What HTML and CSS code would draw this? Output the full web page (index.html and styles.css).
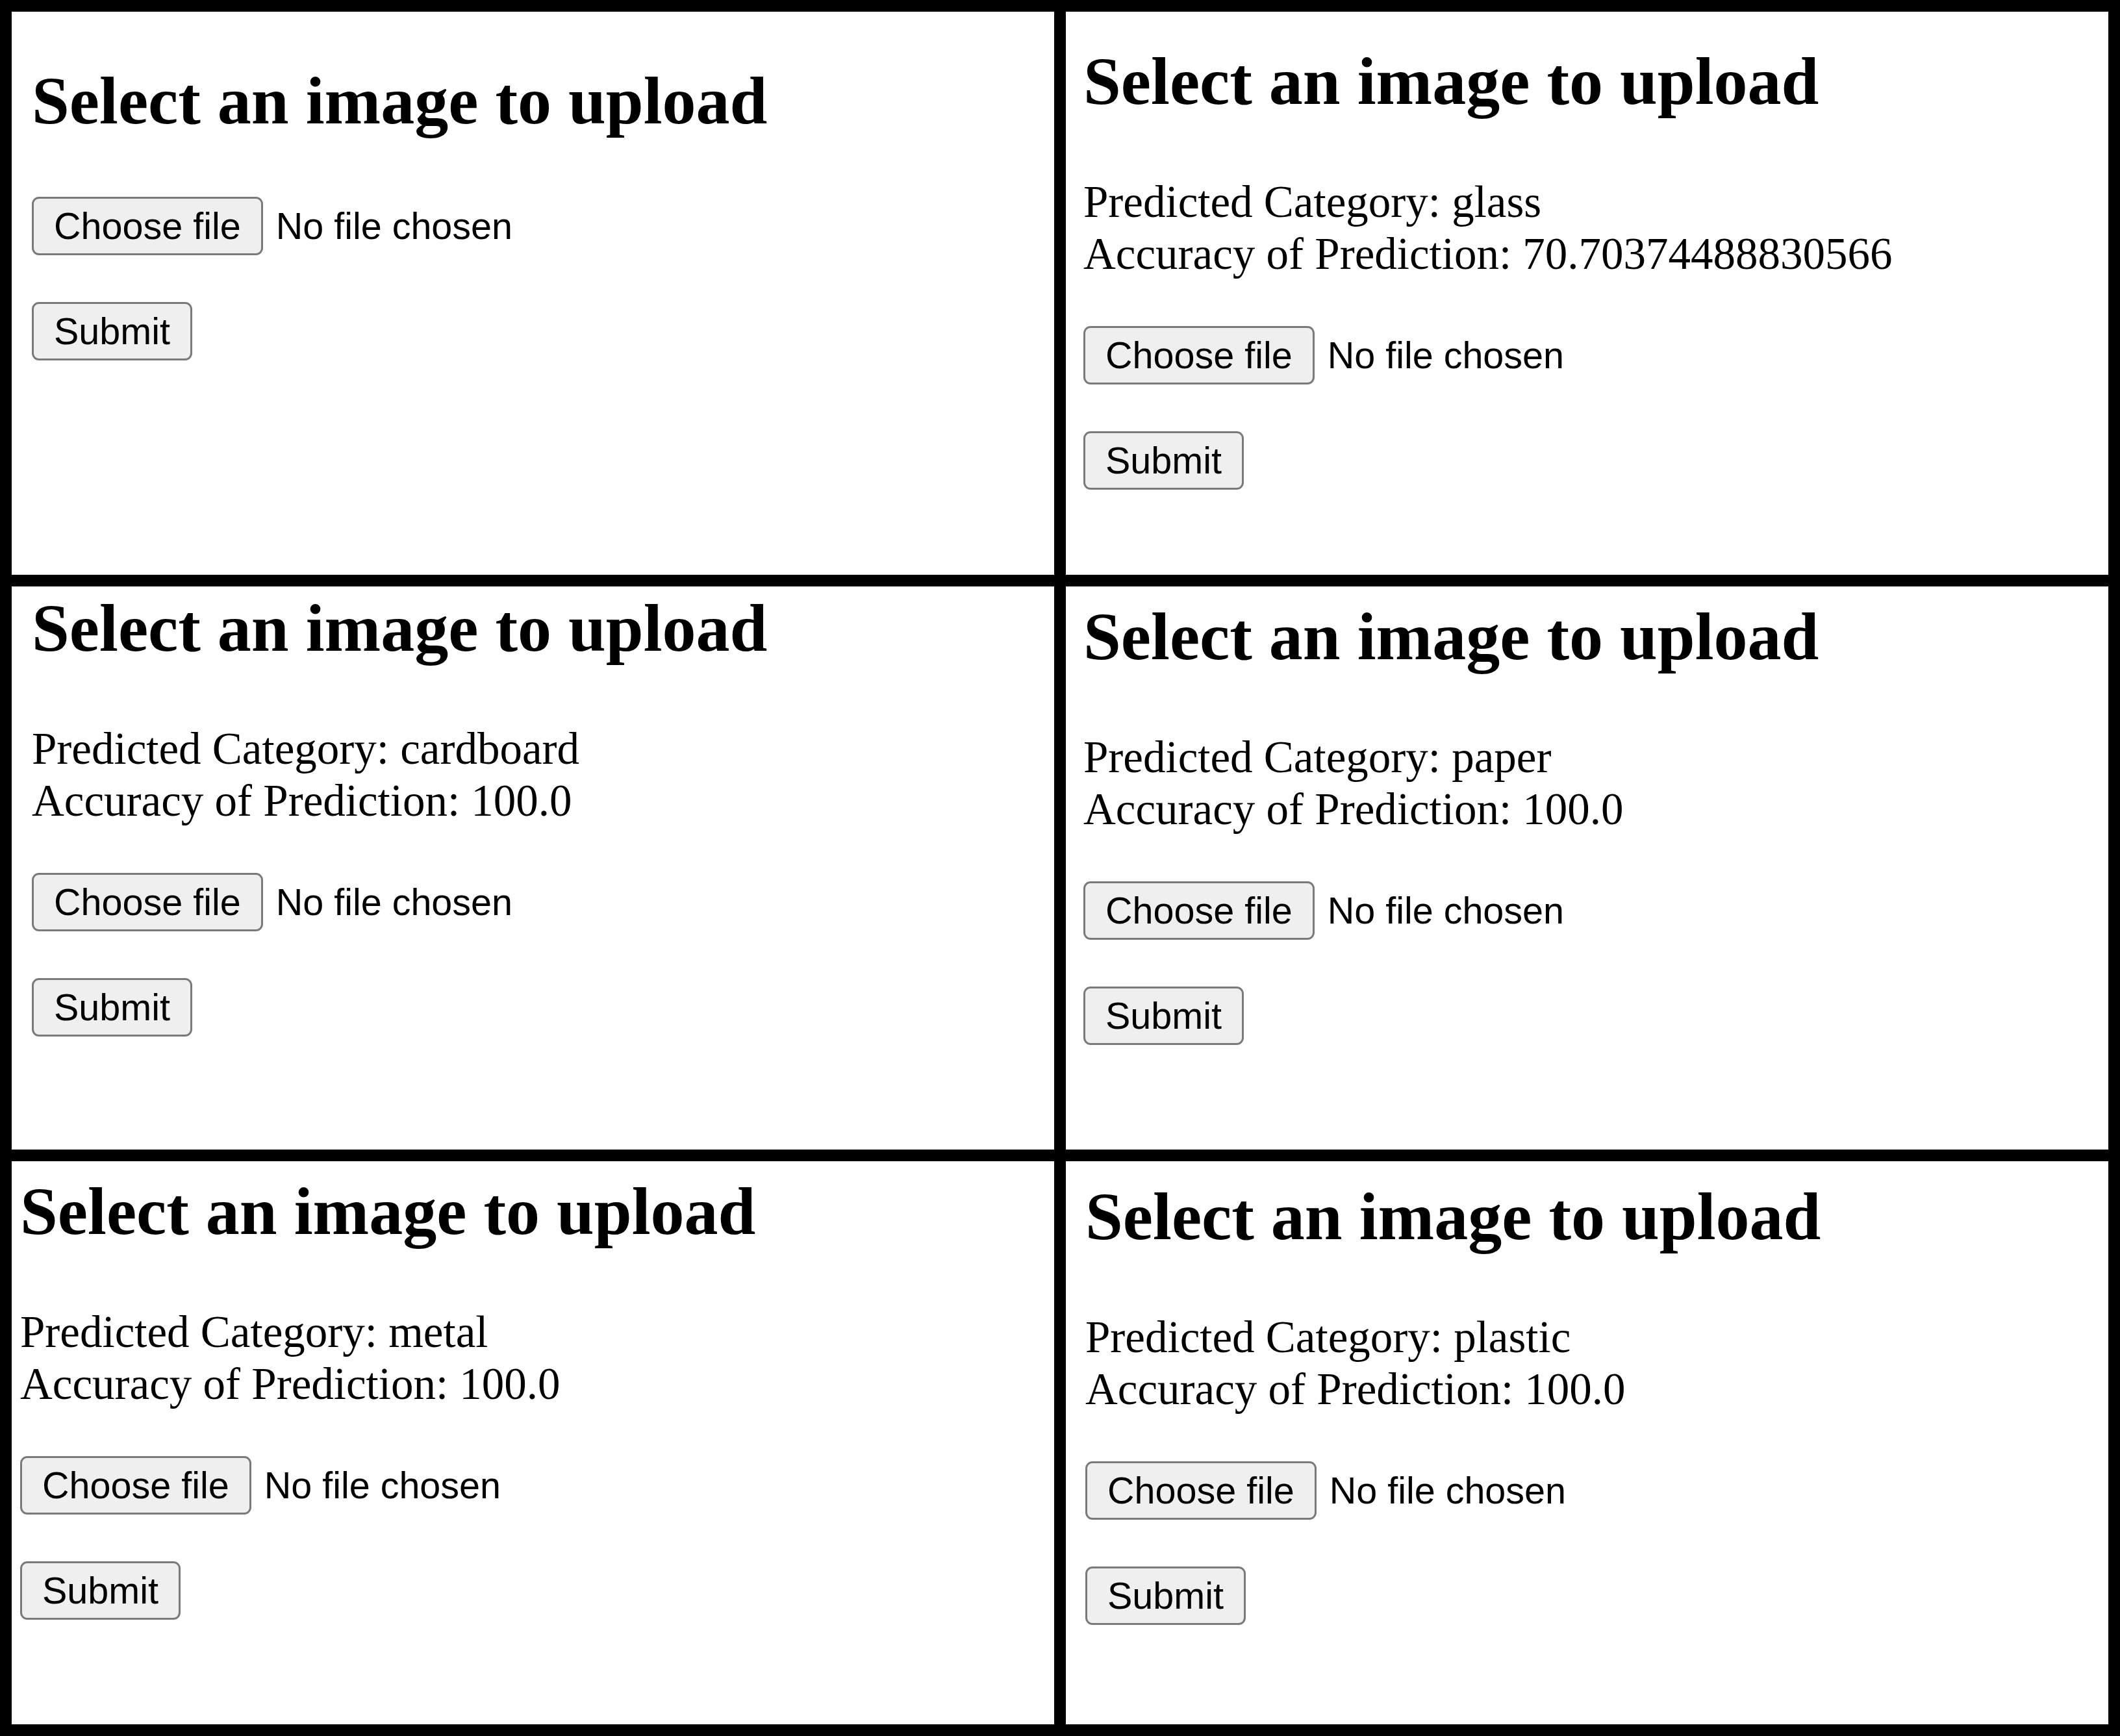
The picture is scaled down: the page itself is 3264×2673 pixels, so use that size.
FILE: index.html
```html
<!DOCTYPE html>
<html lang="en">
<head>
<meta charset="utf-8">
<title>Select an image to upload</title>
<link rel="stylesheet" href="styles.css">
</head>
<body>
<main class="collage">
  <section class="panel panel--1">
    <h2 class="title">Select an image to upload</h2>
    <form class="upload">
      <div class="file-row"><span class="btn">Choose file</span><span class="file-name">No file chosen</span></div>
      <span class="btn">Submit</span>
    </form>
  </section>
  <section class="panel panel--2">
    <h2 class="title">Select an image to upload</h2>
    <p class="result">Predicted Category: glass<br>Accuracy of Prediction: 70.70374488830566</p>
    <form class="upload">
      <div class="file-row"><span class="btn">Choose file</span><span class="file-name">No file chosen</span></div>
      <span class="btn">Submit</span>
    </form>
  </section>
  <section class="panel panel--3">
    <h2 class="title">Select an image to upload</h2>
    <p class="result">Predicted Category: cardboard<br>Accuracy of Prediction: 100.0</p>
    <form class="upload">
      <div class="file-row"><span class="btn">Choose file</span><span class="file-name">No file chosen</span></div>
      <span class="btn">Submit</span>
    </form>
  </section>
  <section class="panel panel--4">
    <h2 class="title">Select an image to upload</h2>
    <p class="result">Predicted Category: paper<br>Accuracy of Prediction: 100.0</p>
    <form class="upload">
      <div class="file-row"><span class="btn">Choose file</span><span class="file-name">No file chosen</span></div>
      <span class="btn">Submit</span>
    </form>
  </section>
  <section class="panel panel--5">
    <h2 class="title">Select an image to upload</h2>
    <p class="result">Predicted Category: metal<br>Accuracy of Prediction: 100.0</p>
    <form class="upload">
      <div class="file-row"><span class="btn">Choose file</span><span class="file-name">No file chosen</span></div>
      <span class="btn">Submit</span>
    </form>
  </section>
  <section class="panel panel--6">
    <h2 class="title">Select an image to upload</h2>
    <p class="result">Predicted Category: plastic<br>Accuracy of Prediction: 100.0</p>
    <form class="upload">
      <div class="file-row"><span class="btn">Choose file</span><span class="file-name">No file chosen</span></div>
      <span class="btn">Submit</span>
    </form>
  </section>
</main>
</body>
</html>
```
FILE: styles.css
```css
html, body {
  margin: 0;
  padding: 0;
  background: #000;
}

.collage {
  display: grid;
  grid-template-columns: 1605px 1605px;
  grid-template-rows: 867px 867px 867px;
  gap: 18px;
  padding: 18px;
  width: 3264px;
  height: 2673px;
  box-sizing: border-box;
  background: #000;
}

.panel {
  background: #fff;
  overflow: hidden;
  color: #000;
  font-family: "Liberation Serif", "Times New Roman", serif;
}

.panel--1 { padding: 77px 0 0 31px; }
.panel--2 { padding: 47px 0 0 27px; }
.panel--3 { padding: 4px 0 0 31px; }
.panel--4 { padding: 17px 0 0 27px; }
.panel--5 { padding: 17px 0 0 13px; }
.panel--6 { padding: 25px 0 0 30px; }

.title {
  margin: 0 0 86px;
  font-size: 104px;
  line-height: 120px;
  font-weight: bold;
}

.panel--1 .title {
  margin-bottom: 88px;
}

.result {
  margin: 0 0 71px;
  font-size: 69px;
  line-height: 80px;
}

.upload {
  display: flex;
  flex-direction: column;
  align-items: flex-start;
  gap: 72px;
}

.file-row {
  display: flex;
  align-items: center;
  gap: 20px;
}

.btn {
  display: inline-flex;
  align-items: center;
  height: 90px;
  box-sizing: border-box;
  padding: 0 31px;
  border: 3px solid #7a7a7a;
  border-radius: 11px;
  background: #efefef;
  font-family: "Liberation Sans", Arial, Helvetica, sans-serif;
  font-size: 57.5px;
  color: #000;
  white-space: nowrap;
}

.file-name {
  font-family: "Liberation Sans", Arial, Helvetica, sans-serif;
  font-size: 57.5px;
  color: #000;
  white-space: nowrap;
}
```
